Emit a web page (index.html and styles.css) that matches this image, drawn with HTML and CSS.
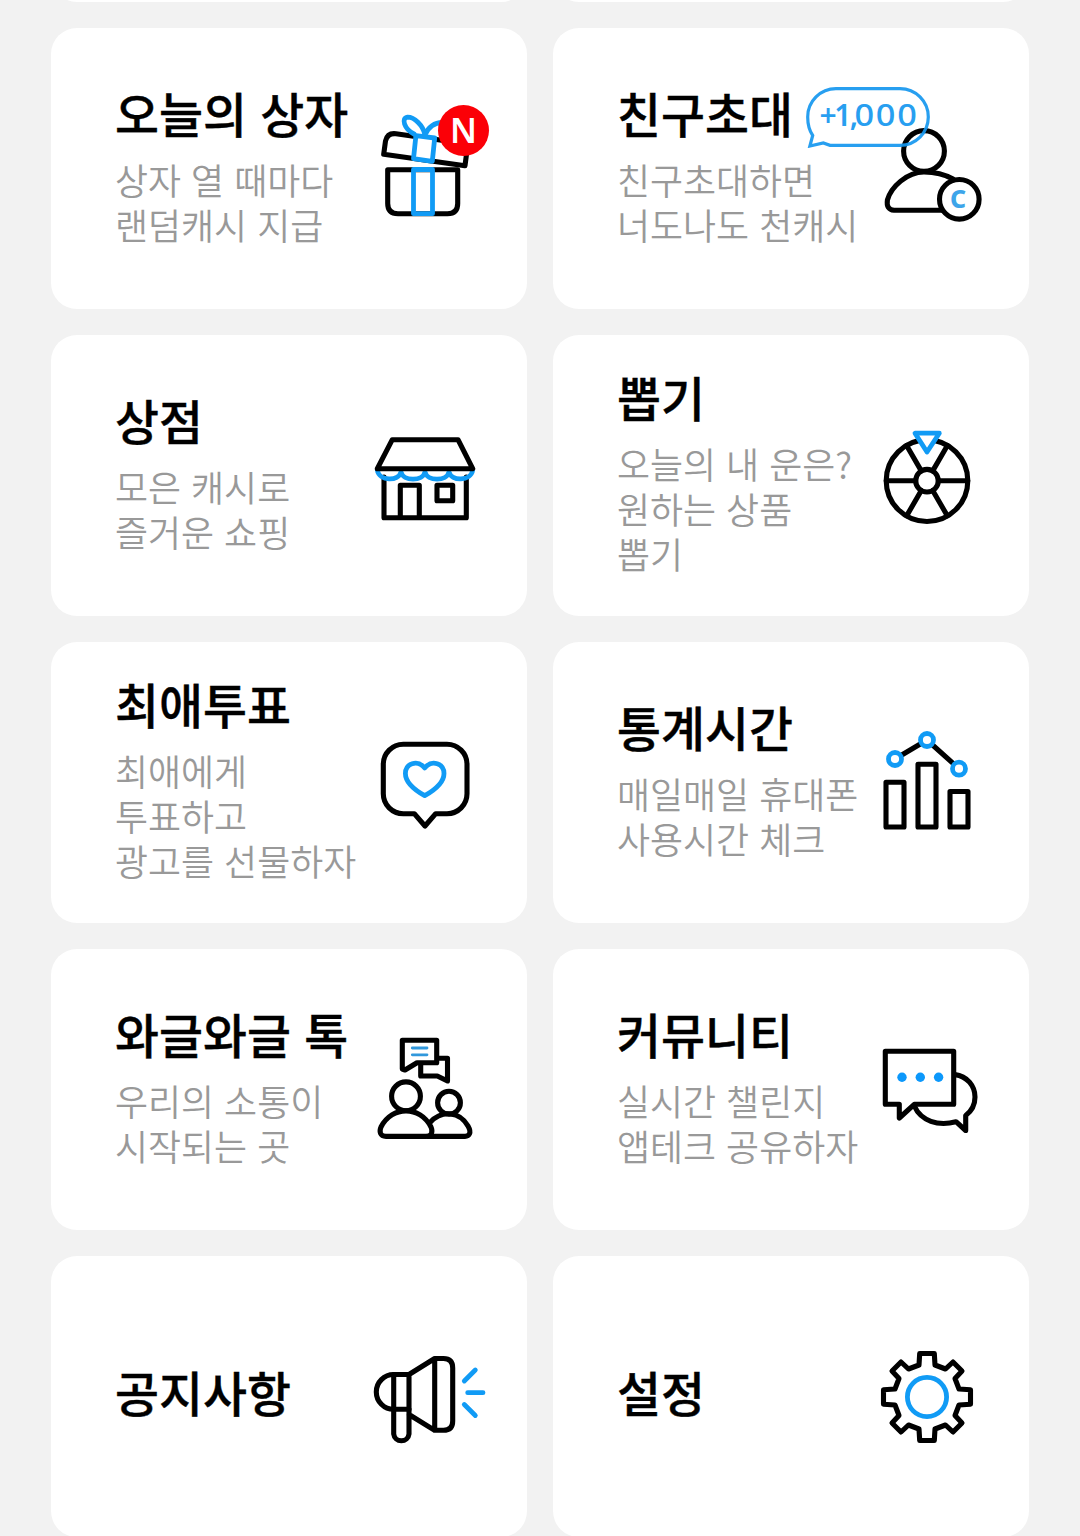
FILE: index.html
```html
<!DOCTYPE html>
<html lang="ko">
<head>
    <meta charset="UTF-8">
    <title>전체메뉴</title>
    <link rel="stylesheet" href="styles.css">
</head>
<body>

    <div class="menu">
        <div class="card"></div>
        <div class="card"></div>

        <div class="card">
            <div class="card-text">
                <h2 class="card-title">오늘의 상자</h2>
                <p class="card-desc">상자 열 때마다<br>랜덤캐시 지급</p>
            </div>
            <svg class="icon" viewBox="0 0 120 121">
                <path d="M17.7 61.7H87.7V95.5Q87.7 105.7 77.5 105.7H28Q17.7 105.7 17.7 95.5Z"/>
                <path d="M96.8 44L95 57.7L13.7 46.3L15.5 33Q17.5 24.7 26 25.8L98 36"/>
                <path class="blue" d="M43.5 61.5H62.5V105.7H43.5Z"/>
                <path class="blue fill" d="M45.9 27.7L64.7 30L62.3 53.3L43.5 50.7Z"/>
                <path class="blue" d="M55 27C53 17 44 9 37.5 9.2C31 10 34 21 44 26M55 27C58 19 65 14.5 72 14.5"/>
            </svg>
            <span class="badge-new">N</span>
        </div>

        <div class="card">
            <div class="card-text">
                <h2 class="card-title">친구초대</h2>
                <p class="card-desc">친구초대하면<br>너도나도 천캐시</p>
            </div>
            <svg class="icon" viewBox="0 0 120 121">
                <circle cx="52" cy="43" r="20.4"/>
                <path d="M71 102.2H22Q14 101.5 15.4 92C19 79 35 64 52 64C62 64 72 66 81 71"/>
                <circle class="fill" cx="87.3" cy="91.3" r="19.8"/>
                <text class="coin" x="86" y="100">C</text>
            </svg>
            <!-- 말풍선 -->
            <svg class="bubble" viewBox="0 0 124 61">
                <path d="M30 1.7H94A28.3 28.3 0 0 1 94 58.3H24L17.3 56L3.9 59L6.7 48.5Q1.7 41 1.7 30A28.3 28.3 0 0 1 30 1.7Z"/>
                <text x="13.5" y="38.5">+<tspan dx="-1">1,</tspan><tspan class="zeros" x="48.5" textLength="64" lengthAdjust="spacingAndGlyphs">000</tspan></text>
            </svg>
        </div>

        <div class="card">
            <div class="card-text">
                <h2 class="card-title">상점</h2>
                <p class="card-desc">모은 캐시로<br>즐거운 쇼핑</p>
            </div>
            <svg class="icon" viewBox="0 0 120 121">
                <path d="M14 62V102.7H96.3V62M30.3 102.7V70.3H49.3V102.7M67 70.3H82.7V85.7H67Z"/>
                <path class="blue" d="M7.3 55C9 66.5 29 66.5 31 57C33 66.5 53 66.5 55 57C57 66.5 77 66.5 79 57C81 66.5 101 66.5 102.7 55"/>
                <path d="M22.3 24.7H88L102.7 53.7H7.3Z"/>
            </svg>
        </div>

        <div class="card">
            <div class="card-text">
                <h2 class="card-title">뽑기</h2>
                <p class="card-desc">오늘의 내 운은?<br>원하는 상품<br>뽑기</p>
            </div>
            <svg class="icon" viewBox="0 0 120 121">
                <circle cx="55" cy="65.7" r="40.8"/>
                <circle cx="55" cy="65.7" r="11.3"/>
                <path d="M14.3 65.7H43.7M66.3 65.7H95.7M34.6 30.5L49.3 55.9M75.4 30.5L60.7 55.9M34.6 100.9L49.3 75.5M75.4 100.9L60.7 75.5"/>
                <path class="blue fill" d="M43 18.2H67.3L55 37Z"/>
            </svg>
        </div>

        <div class="card">
            <div class="card-text">
                <h2 class="card-title">최애투표</h2>
                <p class="card-desc">최애에게<br>투표하고<br>광고를 선물하자</p>
            </div>
            <svg class="icon" viewBox="0 0 120 121">
                <path d="M33.3 22.3H77A20 20 0 0 1 97 42.3V71.7A20 20 0 0 1 77 91.7H65.7L55 104L44.3 91.7H33.3A20 20 0 0 1 13.3 71.7V42.3A20 20 0 0 1 33.3 22.3Z"/>
                <path class="blue" d="M54.7 73.7C42 66.5 35.4 59 35.4 51.5C35.4 42 47 37 54.7 46C62.4 37 74 42 74 51.5C74 59 67.4 66.5 54.7 73.7Z"/>
            </svg>
        </div>

        <div class="card">
            <div class="card-text">
                <h2 class="card-title">통계시간</h2>
                <p class="card-desc">매일매일 휴대폰<br>사용시간 체크</p>
            </div>
            <svg class="icon" viewBox="0 0 120 121">
                <path d="M14 60.3H32V105H14ZM46 42.2H64V105H46ZM78 69.5H96V105H78Z"/>
                <path d="M23 37L55 18L87 46.7"/>
                <circle class="blue fill" cx="23" cy="37" r="6.5"/>
                <circle class="blue fill" cx="55" cy="18" r="6.5"/>
                <circle class="blue fill" cx="87" cy="46.7" r="6.5"/>
            </svg>
        </div>

        <div class="card">
            <div class="card-text">
                <h2 class="card-title">와글와글 톡</h2>
                <p class="card-desc">우리의 소통이<br>시작되는 곳</p>
            </div>
            <svg class="icon" viewBox="0 0 120 121">
                <path d="M68.7 29.3H77.5V52L67.3 47H50.7V35"/>
                <path class="fill" d="M32.3 11.2H66.7V33.7H47L35 41L32.3 40Z"/>
                <path class="blue thin" d="M42.3 19H57M42.3 25.8H57"/>
                <circle cx="79" cy="73.7" r="11.4"/>
                <path d="M60 93.5C72 80.5 90 82.5 98 97C102 104 99 107.4 95 107.4H58"/>
                <circle cx="36" cy="67.3" r="14.4"/>
                <path class="fill" d="M16 107.4C10 107.4 9 102.5 11 98C22 76.5 50 76.5 61 98C63 102.5 62 107.4 56 107.4Z"/>
            </svg>
        </div>

        <div class="card">
            <div class="card-text">
                <h2 class="card-title">커뮤니티</h2>
                <p class="card-desc">실시간 챌린지<br>앱테크 공유하자</p>
            </div>
            <svg class="icon" viewBox="0 0 120 121">
                <path d="M83 45.6C95 47 103 57 103 68C103 76 99 82.5 93.7 86.5V101.5L84 92.7C66 97.5 49 92 42.3 77"/>
                <path class="fill" d="M13.3 22.3H81.7V75.3H42.3L27.3 89V75.3H13.3Z"/>
                <circle class="dot" cx="30" cy="48.3" r="4.7"/>
                <circle class="dot" cx="48.3" cy="48.3" r="4.7"/>
                <circle class="dot" cx="66.6" cy="48.3" r="4.7"/>
            </svg>
        </div>

        <div class="card">
            <div class="card-text">
                <h2 class="card-title">공지사항</h2>
            </div>
            <svg class="icon" viewBox="0 0 120 121">
                <path d="M39 38.5H23.7A17.4 17.4 0 0 0 23.7 73.3H39"/>
                <path d="M23.7 38.5V98A7.7 7.7 0 0 0 39 98V38.5L64.7 22.5H73.5Q82.7 22.5 82.7 32V85Q82.7 94.3 73.5 94.3H64.7L39 78.5M64.7 22.5V94.3"/>
                <path class="blue" d="M94.3 45L105.3 34M97.7 56.7H113M94.3 68.5L105.3 79.5"/>
            </svg>
        </div>

        <div class="card">
            <div class="card-text">
                <h2 class="card-title">설정</h2>
            </div>
            <svg class="icon" viewBox="-55 -61 120 121">
                <path d="M-7.3 -43.5H7.3L8 -32L18.5 -28L26 -35L35 -26L28 -18.5L32 -8L43.5 -7.3V7.3L32 8L28 18.5L35 26L26 35L18.5 28L8 32L7.3 43.5H-7.3L-8 32L-18.5 28L-26 35L-35 26L-28 18.5L-32 8L-43.5 7.3V-7.3L-32 -8L-28 -18.5L-35 -26L-26 -35L-18.5 -28L-8 -32Z"/>
                <circle class="blue" cx="0" cy="0" r="19.6"/>
            </svg>
        </div>
    </div>

</body>
</html>
```
FILE: styles.css
```css
* {
    margin: 0;
    padding: 0;
    box-sizing: border-box;
}
html, body {
    height: 1536px;
    overflow: hidden;
}
body {
    background: #f2f2f2;
    color: #000;
    font-family: "Noto Sans CJK KR", sans-serif;
}

/* scrolled list, the first row is almost out of view */
.menu {
    display: grid;
    grid-template-columns: 476px 476px;
    grid-auto-rows: 281px;
    gap: 26px;
    justify-content: center;
    margin-top: -279px;
}
.card {
    position: relative;
    display: flex;
    align-items: center;
    justify-content: space-between;
    padding: 0 37px 0 64px;
    background: #fff;
    border-radius: 26px;
}
.card-text {
    white-space: nowrap;
}
.card-title {
    padding-bottom: 10px;
    font-size: 47.8px;
    font-weight: 500;
    line-height: 50px;
    -webkit-text-stroke: .4px #000;
}
.card-desc {
    margin-top: 9px;
    padding-bottom: 3px;
    color: #999;
    font-size: 35.9px;
    font-weight: 350;
    line-height: 45px;
}

/* icons */
.icon {
    flex: none;
    width: 120px;
    height: 121px;
    fill: none;
    stroke: #000;
    stroke-width: 5.1;
    stroke-linecap: round;
    stroke-linejoin: round;
}
.icon .fill {
    fill: #fff;
}
.icon .blue {
    stroke: #119bf5;
    stroke-width: 4.8;
}
.icon .thin {
    stroke: #3198dc;
    stroke-width: 2.8;
}
.icon .dot {
    fill: #0c98fb;
    stroke: none;
}
.icon .coin {
    fill: #3da5ea;
    stroke: none;
    font: 800 25px "Noto Sans", sans-serif;
    text-anchor: middle;
}

.badge-new {
    position: absolute;
    top: 77px;
    left: 387px;
    width: 51px;
    height: 51px;
    border-radius: 50%;
    background: #fb0007;
    color: #fff;
    font: 600 34px/51px "Noto Sans", sans-serif;
    text-align: center;
}
.bubble {
    position: absolute;
    top: 59px;
    left: 253px;
    width: 124px;
    height: 61px;
    fill: none;
    stroke: #1597ef;
    stroke-width: 3.2;
    opacity: .92;
}
.bubble text {
    fill: #1597ef;
    stroke: none;
    font: 600 30px "Noto Sans", sans-serif;
    letter-spacing: -1.5px;
}
.bubble .zeros {
    font-weight: 500;
    letter-spacing: 1.5px;
}
```
